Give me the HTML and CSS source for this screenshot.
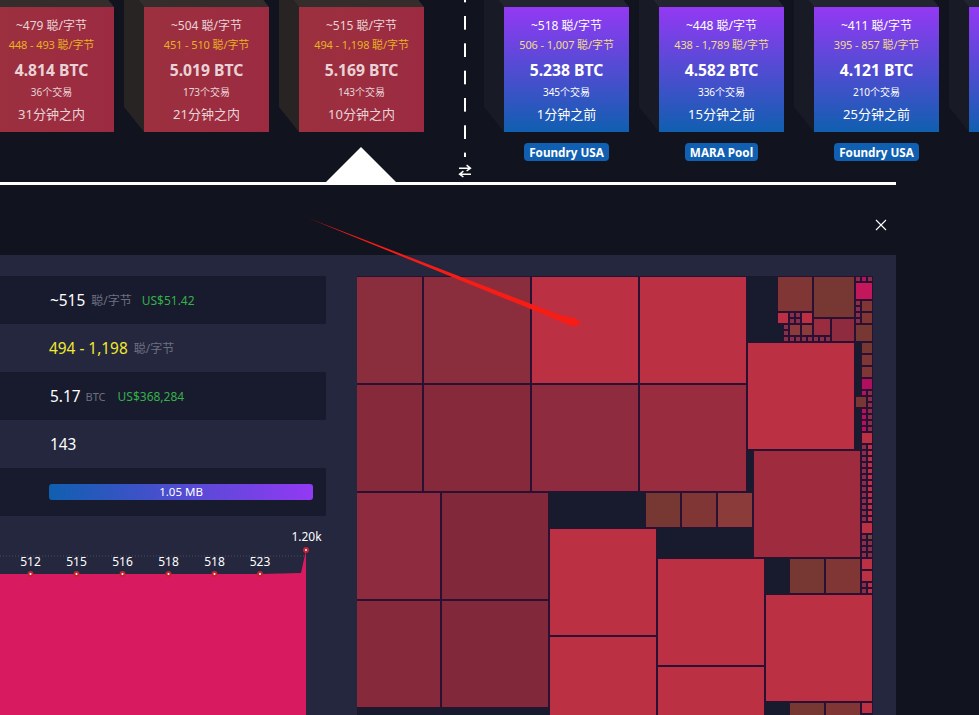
FILE: index.html
```html
<!DOCTYPE html>
<html lang="zh">
<head>
<meta charset="utf-8">
<title>Block overview</title>
<link rel="stylesheet" href="styles.css">
</head>
<body>
<header class="top">
  <div class="chain">
    <div class="blocks">
      <div class="block"><div class="card mined"><div class="fee">~479 聪/字节</div><div class="span">448 - 493 聪/字节</div><div class="total">4.814 BTC</div><div class="txs">36个交易</div><div class="time">31分钟之内</div></div></div>
      <div class="block"><div class="card mined"><div class="fee">~504 聪/字节</div><div class="span">451 - 510 聪/字节</div><div class="total">5.019 BTC</div><div class="txs">173个交易</div><div class="time">21分钟之内</div></div></div>
      <div class="block"><div class="card mined"><div class="fee">~515 聪/字节</div><div class="span">494 - 1,198 聪/字节</div><div class="total">5.169 BTC</div><div class="txs">143个交易</div><div class="time">10分钟之内</div></div></div>
    </div>
    <div class="divider">
      <div class="dashes"></div>
      <svg class="swap" viewBox="0 0 14 14" width="14" height="14"><path d="M1 4.2H12M8.6 1.2L12.4 4.2L8.6 7M13 10.2H2M5.4 7.2L1.6 10.2L5.4 13" fill="none" stroke="#fff" stroke-width="1.5"/></svg>
    </div>
    <div class="blocks">
      <div class="block"><div class="card next"><div class="fee">~518 聪/字节</div><div class="span">506 - 1,007 聪/字节</div><div class="total">5.238 BTC</div><div class="txs">345个交易</div><div class="time">1分钟之前</div></div><span class="pool">Foundry USA</span></div>
      <div class="block"><div class="card next"><div class="fee">~448 聪/字节</div><div class="span">438 - 1,789 聪/字节</div><div class="total">4.582 BTC</div><div class="txs">336个交易</div><div class="time">15分钟之前</div></div><span class="pool">MARA Pool</span></div>
      <div class="block"><div class="card next"><div class="fee">~411 聪/字节</div><div class="span">395 - 857 聪/字节</div><div class="total">4.121 BTC</div><div class="txs">210个交易</div><div class="time">25分钟之前</div></div><span class="pool">Foundry USA</span></div>
      <div class="block"><div class="card next"></div></div>
    </div>
  </div>
  <div class="marker"></div>
</header>
<div class="rule"></div>
<div class="modal-head">
  <svg class="close" viewBox="0 0 12 12" width="12" height="12"><path d="M1 1L11 11M11 1L1 11" stroke="#fff" stroke-width="1.1" fill="none"/></svg>
</div>
<main class="panel">
  <section class="stats">
    <div class="row"><span class="val">~515</span> <span class="unit">聪/字节</span><span class="fiat">US$51.42</span></div>
    <div class="row"><span class="val yellow">494 - 1,198</span> <span class="unit">聪/字节</span></div>
    <div class="row"><span class="val">5.17</span> <span class="unit btc">BTC</span><span class="fiat wide">US$368,284</span></div>
    <div class="row"><span class="val">143</span></div>
    <div class="row"><div class="bar">1.05 MB</div></div>
    <svg class="chart" viewBox="0 516 326 199" width="326" height="199">
      <line class="grid" x1="0" y1="556" x2="304" y2="556"/>
      <path class="area" d="M0 574H30L260 574L301 573L306 550V715H0Z"/>
      <g class="dots">
        <circle cx="30.5" cy="574" r="2"/><circle cx="76.5" cy="574" r="2"/><circle cx="122.5" cy="574" r="2"/><circle cx="168.5" cy="574" r="2"/><circle cx="214.5" cy="574" r="2"/><circle cx="260" cy="574" r="2"/><circle cx="306" cy="550" r="2"/>
      </g>
      <g class="labels">
        <text x="30.5" y="566">512</text><text x="76.5" y="566">515</text><text x="122.5" y="566">516</text><text x="168.5" y="566">518</text><text x="214.5" y="566">518</text><text x="260" y="566">523</text><text x="306.5" y="541">1.20k</text>
      </g>
    </svg>
  </section>
  <svg class="treemap" viewBox="357 276 516 439" width="516" height="439">
    <rect class="c a1" x="330" y="277" width="92" height="106"/><rect class="l a1" x="424" y="277"/><rect class="l hot" x="532" y="277"/><rect class="l hot" x="640" y="277"/>
    <rect class="c a2" x="330" y="385" width="92" height="106"/><rect class="l a2" x="424" y="385"/><rect class="l a3" x="532" y="385"/><rect class="l a4" x="640" y="385"/>
    <rect class="c a3" x="330" y="493" width="110" height="106"/><rect class="l a5" x="442" y="493"/>
    <rect class="c a2" x="330" y="601" width="110" height="106"/><rect class="l a5" x="442" y="601"/>
    <rect class="l hot" x="550" y="529"/><rect class="l hot" x="550" y="637"/><rect class="l hot" x="658" y="559"/><rect class="l hot" x="658" y="667"/><rect class="l hot" x="766" y="595"/>
    <rect class="l hot" x="748" y="343"/><rect class="l a6" x="754" y="451"/>
    <rect class="m b1" x="646" y="493"/><rect class="m b2" x="682" y="493"/><rect class="m b3" x="718" y="493"/>
    <rect class="m b1" x="790" y="559"/><rect class="m b2" x="826" y="559"/><rect class="m b1" x="790" y="703"/><rect class="m b2" x="826" y="703"/>
    <rect class="m b2" x="778" y="277"/><rect class="c b1" x="814" y="277" width="40" height="40"/>
    <rect class="c a4" x="814" y="319" width="16" height="16"/><rect class="c a3" x="832" y="319" width="22" height="22"/>
    <rect class="s hot" x="778" y="313"/><rect class="s hot" x="802" y="313"/><rect class="s a7" x="790" y="325"/><rect class="s a7" x="802" y="325"/>
    <g class="tiny">
      <rect class="t" x="790" y="313"/><rect class="t" x="796" y="313"/><rect class="t" x="790" y="319"/><rect class="t" x="796" y="319"/>
      <rect class="t" x="784" y="325"/><rect class="t" x="784" y="331"/>
      <rect class="t" x="784" y="337"/><rect class="t" x="790" y="337"/><rect class="t" x="796" y="337"/><rect class="t" x="802" y="337"/><rect class="t" x="808" y="337"/><rect class="t" x="814" y="337"/><rect class="t" x="820" y="337"/><rect class="t" x="826" y="337"/>
      <rect class="t" x="856" y="277"/><rect class="t mag" x="862" y="277"/><rect class="t" x="868" y="277"/>
      <rect class="t" x="856" y="301"/><rect class="t" x="856" y="307"/><rect class="t" x="856" y="313"/><rect class="t" x="856" y="319"/>
      <rect class="t mag" x="862" y="391"/><rect class="t" x="868" y="391"/><rect class="t" x="868" y="397"/><rect class="t" x="868" y="403"/>
      <rect class="t mag" x="862" y="409"/><rect class="t" x="868" y="409"/><rect class="t mag" x="862" y="415"/><rect class="t" x="868" y="415"/><rect class="t mag" x="862" y="421"/><rect class="t" x="868" y="421"/><rect class="t mag" x="862" y="427"/><rect class="t" x="868" y="427"/>
      <rect class="t" x="862" y="445"/><rect class="t hotc" x="868" y="445"/><rect class="t" x="862" y="451"/><rect class="t hotc" x="868" y="451"/><rect class="t" x="862" y="457"/><rect class="t hotc" x="868" y="457"/><rect class="t" x="862" y="463"/><rect class="t hotc" x="868" y="463"/><rect class="t" x="862" y="469"/><rect class="t hotc" x="868" y="469"/><rect class="t" x="862" y="475"/><rect class="t hotc" x="868" y="475"/><rect class="t" x="862" y="481"/><rect class="t hotc" x="868" y="481"/><rect class="t" x="862" y="487"/><rect class="t hotc" x="868" y="487"/><rect class="t" x="862" y="493"/><rect class="t hotc" x="868" y="493"/><rect class="t" x="862" y="499"/><rect class="t hotc" x="868" y="499"/><rect class="t" x="862" y="505"/><rect class="t hotc" x="868" y="505"/><rect class="t" x="862" y="511"/><rect class="t hotc" x="868" y="511"/><rect class="t" x="862" y="517"/><rect class="t hotc" x="868" y="517"/>
      <rect class="t" x="862" y="535"/><rect class="t b3" x="868" y="535"/><rect class="t" x="862" y="541"/><rect class="t" x="868" y="541"/><rect class="t" x="862" y="547"/><rect class="t" x="868" y="547"/><rect class="t" x="862" y="553"/><rect class="t" x="868" y="553"/>
      <rect class="t" x="862" y="583"/><rect class="t hotc" x="868" y="583"/><rect class="t" x="862" y="589"/><rect class="t hotc" x="868" y="589"/>
    </g>
    <rect class="c pink" x="856" y="283" width="16" height="16"/><rect class="s b2" x="862" y="301"/><rect class="s b2" x="862" y="313"/><rect class="c b1" x="856" y="325" width="16" height="16"/>
    <rect class="s b1" x="862" y="343"/><rect class="s b2" x="862" y="355"/><rect class="s b2" x="862" y="367"/><rect class="s mag" x="862" y="379"/><rect class="s b1" x="856" y="397"/>
    <rect class="s hot" x="862" y="433"/><rect class="s hot" x="862" y="523"/><rect class="s hot" x="862" y="559"/><rect class="s hot" x="862" y="571"/><rect class="s hot" x="862" y="703"/>
  </svg>
</main>
<svg class="pointer" viewBox="0 0 979 715" width="979" height="715"><polygon points="308,218 560,315 575,318 582,324 572,326.5 556,319.5"/></svg>
</body>
</html>
```
FILE: styles.css
```css
* { box-sizing: border-box; }
html, body { margin: 0; height: 715px; overflow: hidden; }
body {
  background: #11131f;
  color: #fff;
  font-family: "Noto Sans", "Noto Sans CJK SC", sans-serif;
  position: relative;
}
.top { position: relative; height: 182px; }
.chain { display: flex; margin-left: -11px; width: 1200px; }
.blocks { display: flex; gap: 30px; padding-top: 7px; }
.block { width: 125px; display: flex; flex-direction: column; align-items: center; }
.card {
  position: relative;
  width: 125px;
  height: 125px;
  padding-top: 10px;
  text-align: center;
}
.card::before, .card::after { content: ""; position: absolute; left: -20px; top: -25px; }
.card::before { width: 20px; height: 150px; clip-path: polygon(0 0, 100% 25px, 100% 100%, 0 125px); }
.card::after { width: 145px; height: 25px; clip-path: polygon(0 0, 125px 0, 100% 100%, 20px 100%); }
.mined { background: linear-gradient(90deg, #9c303e, #9c2b42); color: rgba(255,255,255,.8); }
.mined::before { background: #282423; }
.mined::after { background: #342d2c; }
.next { background: linear-gradient(180deg, #9339f4, #105fb0); }
.next::before { background: #181b26; }
.next::after { background: #22252f; }
.fee { font-size: 12px; line-height: 18px; }
.span { font-size: 11px; line-height: 20px; letter-spacing: -.1px; white-space: nowrap; }
.mined .span { color: #e9b123; }
.next .span { color: #f3dc8b; }
.total { font-size: 15.7px; line-height: 30px; font-weight: 700; }
.txs { font-size: 10px; line-height: 14px; }
.time { font-size: 13px; line-height: 30px; }
.pool {
  margin-top: 11px;
  height: 18px;
  padding: 0 5px;
  border-radius: 4px;
  background: #105fb0;
  font-size: 11.7px;
  line-height: 18px;
  font-weight: 700;
  white-space: nowrap;
}
.divider { width: 14px; height: 182px; margin: 0 32px 0 34px; }
.dashes {
  height: 157px;
  background: linear-gradient(#fff 0 14px, transparent 14px) center 16px / 2px 27.33px repeat-y;
}
.swap { display: block; margin-top: 7px; }
.marker {
  position: absolute;
  left: 326px;
  top: 147px;
  width: 70px;
  height: 35px;
  background: #fff;
  clip-path: polygon(50% 0, 100% 100%, 0 100%);
}
.rule { width: 896px; height: 3px; background: #fff; }
.modal-head { width: 887px; height: 70px; padding-top: 34px; display: flex; justify-content: flex-end; align-items: flex-start; }
.close { display: block; }
.panel {
  width: 896px;
  height: 460px;
  background: #24273e;
  padding-top: 21px;
  display: flex;
  gap: 31px;
  overflow: hidden;
}
.stats { width: 326px; flex: none; }
.row {
  height: 48px;
  padding-left: 50px;
  display: flex;
  align-items: center;
  gap: 5px;
  white-space: nowrap;
}
.row:nth-child(odd) { background: #181b2d; }
.val { font-size: 15.4px; }
.yellow { color: #f2ea2e; margin-left: -1px; }
.unit { font-size: 12px; color: #6d6f80; margin-left: 1px; }
.btc { font-size: 11px; margin-left: 0; }
.fiat { font-size: 12px; color: #35b04a; margin-left: 5px; }
.wide { margin-left: 7px; }
.bar {
  width: 264px;
  height: 16px;
  margin-left: -1px;
  border-radius: 3px;
  background: linear-gradient(90deg, #105fb0, #9339f4);
  font-size: 11.5px;
  line-height: 16px;
  text-align: center;
}
.chart { display: block; }
.grid { stroke: rgba(255,255,255,.18); stroke-width: 1; stroke-dasharray: 1 2; }
.area { fill: #d81b60; }
.dots circle { fill: #fff; stroke: #c62233; stroke-width: 2; }
.labels text { fill: #fff; font-size: 12px; text-anchor: middle; }
.treemap { display: block; flex: none; background: #181b2d; }
.treemap rect { stroke: #2a1032; stroke-width: 2; paint-order: stroke; }
.l { width: 106px; height: 106px; }
.m { width: 34px; height: 34px; }
.s { width: 10px; height: 10px; }
.t { width: 4px; height: 4px; }
.tiny rect { fill: #8a2f49; }
.tiny .mag { fill: #b80f62; }
.tiny .hotc { fill: #bb3148; }
.tiny .b3 { fill: #6e4a3c; }
.hot { fill: #bc3044; }
.a1 { fill: #8a2d3c; }
.a2 { fill: #86293b; }
.a3 { fill: #8f2b3e; }
.a4 { fill: #992c3e; }
.a5 { fill: #81293b; }
.a6 { fill: #9e2b3e; }
.a7 { fill: #8c3a3c; }
.b1 { fill: #773733; }
.b2 { fill: #7f3634; }
.b3 { fill: #8b3b3a; }
.pink { fill: #c2185b; }
.mag { fill: #b00f60; }
.pointer { position: absolute; left: 0; top: 0; pointer-events: none; }
.pointer polygon { fill: #f51d16; }
```
